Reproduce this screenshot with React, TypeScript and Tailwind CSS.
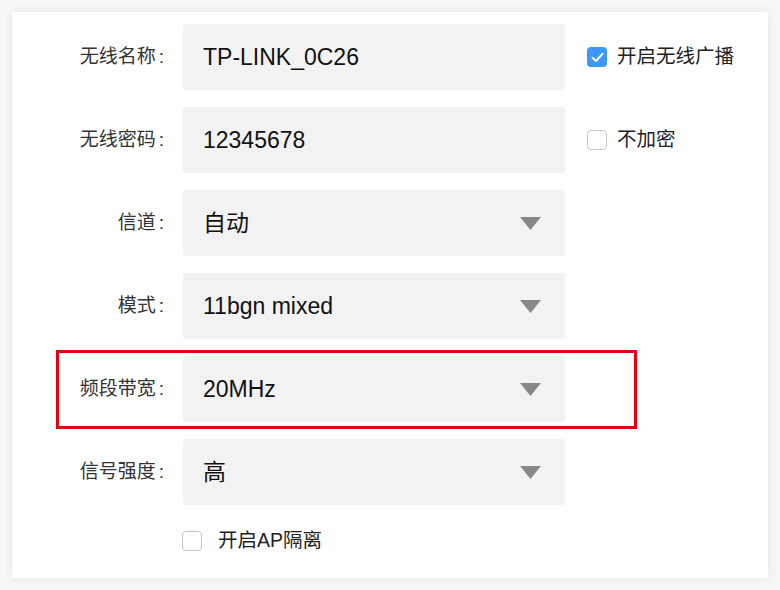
const FONT = "font-['Liberation_Sans','Noto_Sans_CJK_SC',sans-serif]";

const Caret = () => (
  <svg width="21" height="13" viewBox="0 0 21 13" className="shrink-0">
    <polygon points="0,0 21,0 10.5,13" fill="#888888" />
  </svg>
);

const Check = ({ checked = false }: { checked?: boolean }) =>
  checked ? (
    <span className="w-5 h-5 rounded-[4px] bg-[#3d97f7] flex items-center justify-center shrink-0">
      <svg width="13" height="11" viewBox="0 0 13 11">
        <path d="M1.5 5.8 L5 9 L11.5 1.8" fill="none" stroke="white" strokeWidth="2" strokeLinecap="round" strokeLinejoin="round" />
      </svg>
    </span>
  ) : (
    <span className="w-5 h-5 rounded-[4px] border-[1.5px] border-[#c4c4c4] bg-white shrink-0" />
  );

type Row = {
  label: string;
  value: string;
  select?: boolean;
  extra?: { text: string; checked: boolean };
  mark?: boolean;
};

const rows: Row[] = [
  { label: '无线名称', value: 'TP-LINK_0C26', extra: { text: '开启无线广播', checked: true } },
  { label: '无线密码', value: '12345678', extra: { text: '不加密', checked: false } },
  { label: '信道', value: '自动', select: true },
  { label: '模式', value: '11bgn mixed', select: true },
  { label: '频段带宽', value: '20MHz', select: true, mark: true },
  { label: '信号强度', value: '高', select: true },
];

export default function App() {
  return (
    <div className={`w-[780px] h-[590px] bg-[#f7f7f7] p-3 ${FONT}`}>
      <div className="w-[756px] h-[566px] bg-white shadow-[0_0_10px_rgba(0,0,0,0.07)] pt-3 flex flex-col gap-[17px]">
        {rows.map((r) => (
          <div key={r.label} className="relative flex items-center h-[66px]">
            {r.mark && (
              <div className="absolute left-[44px] top-[-6px] w-[581px] h-[79px] border-[3px] border-[#e60012] pointer-events-none" />
            )}
            <div className="w-[171px] pr-[19px] text-right text-[19px] text-[#333]">
              {r.label}
              <span className="ml-[3px]">:</span>
            </div>
            <div className="w-[382px] h-[66px] bg-[#f2f2f2] rounded-[3px] flex items-center justify-between pl-5 pr-6">
              <span className="text-[23px] text-[#111]">{r.value}</span>
              {r.select && <Caret />}
            </div>
            {r.extra && (
              <div className="ml-[22px] flex items-center gap-[10px]">
                <Check checked={r.extra.checked} />
                <span className="text-[19.5px] text-[#222]">{r.extra.text}</span>
              </div>
            )}
          </div>
        ))}
        <div className="flex items-center gap-4 pl-[170px] mt-[4px]">
          <Check />
          <span className="text-[19.5px] text-[#222]">开启AP隔离</span>
        </div>
      </div>
    </div>
  );
}
